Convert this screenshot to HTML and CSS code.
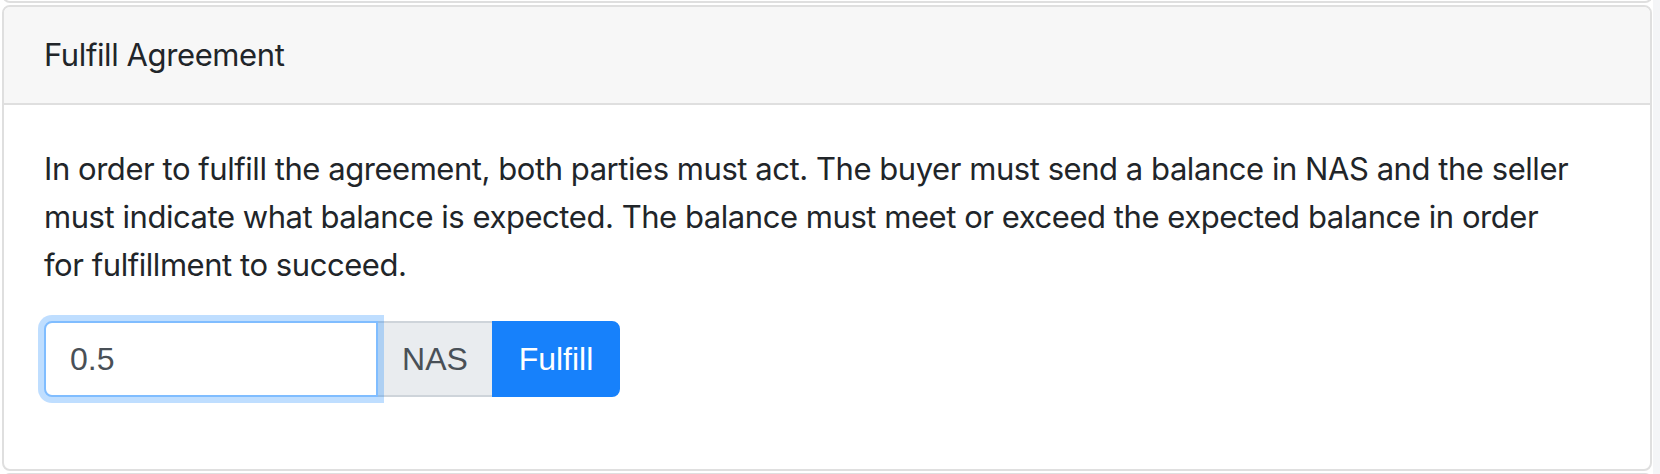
FILE: index.html
```html
<!DOCTYPE html>
<html lang="en">
<head>
<meta charset="utf-8">
<title>Fulfill Agreement</title>
<link rel="stylesheet" href="styles.css">
</head>
<body>
<div class="page">
  <main class="stack">
    <div class="card-edge card-edge-top"></div>
    <section class="card">
      <header class="card-header">Fulfill Agreement</header>
      <div class="card-body">
        <p class="card-text">In order to fulfill the agreement, both parties must act. The buyer must send a balance in NAS and the seller must indicate what balance is expected. The balance must meet or exceed the expected balance in order<br>for fulfillment to succeed.</p>
        <div class="input-group">
          <input class="form-control" type="text" value="0.5">
          <span class="input-group-text">NAS</span>
          <button class="btn btn-primary" type="button">Fulfill</button>
        </div>
      </div>
    </section>
    <div class="card-edge card-edge-bottom"></div>
  </main>
  <div class="side-strip"></div>
</div>
</body>
</html>
```

FILE: styles.css
```css
* { box-sizing: border-box; }
html, body { margin: 0; padding: 0; }
body {
  background: #ffffff;
  font-family: Inter, "Noto Sans", sans-serif;
  color: #212529;
  width: 1660px;
  height: 474px;
  overflow: hidden;
}
.page {
  display: flex;
  height: 474px;
}
.stack {
  width: 1653px;
  padding-left: 2px;
  display: flex;
  flex-direction: column;
  gap: 2px;
}
.side-strip {
  flex: 1;
  background: #f4f5f7;
}
.card-edge {
  border: 2px solid #dfdfdf;
  height: 8px;
  flex: none;
}
.card-edge-top {
  margin-top: -5px;
  border-top: none;
  border-radius: 0 0 8px 8px;
}
.card-edge-bottom {
  border-bottom: none;
  border-radius: 8px 8px 0 0;
}
.card {
  width: 1650px;
  border: 2px solid #dfdfdf;
  border-radius: 8px;
  background: #fff;
  flex: none;
  overflow: hidden;
}
.card-header {
  background: #f7f7f7;
  border-bottom: 2px solid #dfdfdf;
  padding: 24px 40px;
  font-size: 31px;
  letter-spacing: -0.4px;
  line-height: 48px;
}
.card-body {
  padding: 40px;
}
.card-text {
  margin: 0 0 32px;
  font-size: 31px;
  letter-spacing: -0.45px;
  line-height: 48px;
}
.input-group {
  display: flex;
  align-items: stretch;
  margin-bottom: 32px;
}
.form-control {
  width: 334px;
  height: 76px;
  padding: 12px 24px;
  font-family: "Liberation Sans", Arial, sans-serif;
  font-size: 32px;
  color: #495057;
  border: 2px solid #80bdff;
  border-radius: 8px 0 0 8px;
  box-shadow: 0 0 0 6px rgba(0, 123, 255, 0.25);
  outline: none;
  position: relative;
  z-index: 2;
  background: #fff;
}
.input-group-text {
  display: flex;
  align-items: center;
  justify-content: center;
  width: 118px;
  margin-left: -2px;
  padding: 12px 20px;
  font-family: "Liberation Sans", Arial, sans-serif;
  font-size: 32px;
  color: #495057;
  background: #e9ecef;
  border: 2px solid #ced4da;
}
.btn {
  width: 128px;
  margin-left: -2px;
  padding: 12px 18px;
  font-family: "Liberation Sans", Arial, sans-serif;
  font-size: 32px;
  color: #fff;
  background: #1781fb;
  border: 2px solid #1781fb;
  border-radius: 0 8px 8px 0;
}
```
